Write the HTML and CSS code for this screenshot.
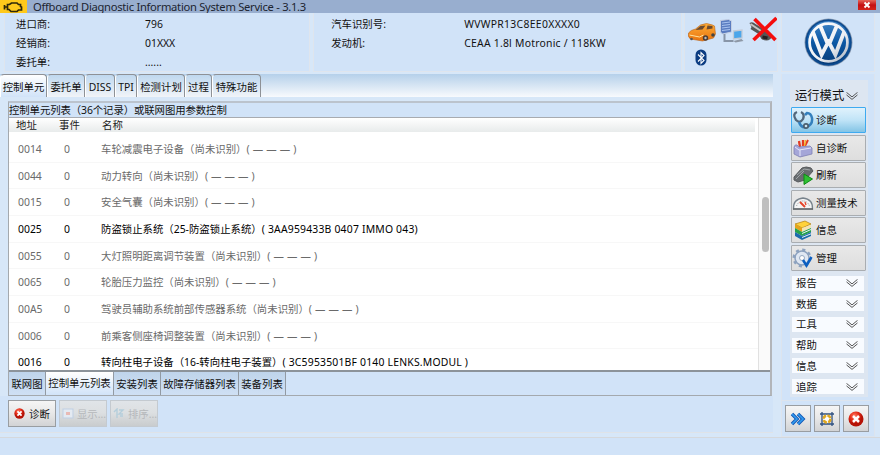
FILE: index.html
```
<!DOCTYPE html>
<html lang="zh-CN">
<head>
<meta charset="utf-8">
<title>Offboard Diagnostic Information System Service</title>
<link rel="stylesheet" href="styles.css">
</head>
<body>
<svg class="defs" width="0" height="0">
  <defs>
    <linearGradient id="blue" x2="0" y2="1"><stop offset="0" stop-color="#3f84c6"/><stop offset=".5" stop-color="#0b57a4"/><stop offset="1" stop-color="#073b77"/></linearGradient>
    <linearGradient id="silver" gradientUnits="userSpaceOnUse" x1="5" y1="5" x2="45" y2="45"><stop offset="0" stop-color="#fff"/><stop offset=".6" stop-color="#eceff4"/><stop offset="1" stop-color="#a4adba"/></linearGradient>
    <linearGradient id="orange" x2="0" y2="1"><stop offset="0" stop-color="#ffae38"/><stop offset="1" stop-color="#e8720c"/></linearGradient>
    <radialGradient id="red" cx=".4" cy=".3"><stop offset="0" stop-color="#ff8066"/><stop offset=".6" stop-color="#e52c18"/><stop offset="1" stop-color="#b51205"/></radialGradient>
    <symbol id="chev" viewBox="0 0 12 8"><path d="M.5.400 6 4.900 11.500.400M.5 2.900 6 7.400 11.500 2.900" fill="none" stroke="#444" stroke-width=".9"/></symbol>
    <symbol id="err" viewBox="0 0 16 16"><circle cx="8" cy="8" r="7.500" fill="url(#red)"/><path d="M5 5l6 6M11 5l-6 6" stroke="#fff" stroke-width="2.500"/></symbol>
  </defs>
</svg>
<header class="titlebar">
  <span class="engine"><svg width="27" height="13" viewBox="0 0 27 13"><path d="M7.500 4.500h2l2-1.500h5.500l1.500 1.500h2v2l1 .5v3h-3l-1.500 1.500h-6L9 9.500H7.500zM4.500 5v4.500M4.500 7h3" fill="none" stroke="#30290a" stroke-width="1.700"/></svg></span>
  <h1>Offboard Diagnostic Information System Service - 3.1.3</h1>
  <span class="close"><svg width="18" height="10" viewBox="0 0 18 10"><path d="M6.500 2.500l5 5M11.500 2.500l-5 5" stroke="#fff" stroke-width="1.900"/></svg></span>
</header>
<section class="info">
  <dl class="panel dealer"><dt>进口商:</dt><dd>796</dd><dt>经销商:</dt><dd>01XXX</dd><dt>委托单:</dt><dd>......</dd></dl>
  <dl class="panel vehicle"><dt>汽车识别号:</dt><dd class="vin">WVWPR13C8EE0XXXX0</dd><dt>发动机:</dt><dd class="eng">CEAA 1.8l Motronic / 118KW</dd></dl>
  <div class="panel status">
    <svg width="92" height="58" viewBox="1.500 0 92 58">
      <path d="M5 20q2-3 7-4l5-4q6-3 12 0l2 1 1 8-2 4-11 3L7 26q-3-2-2-6z" fill="url(#orange)" stroke="#b8651c" stroke-width=".6"/>
      <path d="M12 17l5-4 5-.5-3 4zM24 12.500l5 .5v2.500l-6 1z" fill="#6b4a30"/><path d="M6 22l10 2 4-2" stroke="#ffe3a0" fill="none"/>
      <circle cx="22" cy="25" r="2.700" fill="#4b3b33"/><circle cx="22" cy="25" r="1.200" fill="#bbb"/><circle cx="29.500" cy="22" r="1.800" fill="#444"/><circle cx="8" cy="26" r="1.300" fill="#555"/>
      <path d="M37 7.500l8-1 3 1.500v11l-9 2-2-2z" fill="#5a7cc0" stroke="#c4cfe3"/><path d="M38.500 10l8-1M38.500 12.500l8-1M38.500 15l8-1M38.500 17.500l8-1" stroke="#a9c4f0"/>
      <path d="M41 21v7h9" fill="none" stroke="#8895a7" stroke-width="2"/>
      <path d="M50 18l8.500-1v8l-8.500 1z" fill="#4ca6ea" stroke="#c3cbd7" stroke-width="1.300"/><path d="M50 28l8-2 2 2-8 1.500z" fill="#8e98a6"/>
      <path d="M66 10q3-2 6 1l5 3 8 4q5 4 2 8-4 3-9 0l-3-5-8-5 1-2z" fill="#555"/><path d="M67 11l12 8" stroke="#c5c5c5" stroke-width="2"/><path d="M79 24l5 1" stroke="#222" stroke-width="3"/>
      <path d="M71 6l21 21M93 5L70 27" stroke="#f50d0d" stroke-width="3.600"/>
      <rect x="12" y="36.500" width="11" height="16" rx="5.500" fill="#0b3c82"/><path d="M14.500 41.500l6 6-3 3v-11l3 3-6 6" fill="none" stroke="#fff" stroke-width="1.100"/>
    </svg>
  </div>
  <div class="panel brand">
    <svg width="49" height="49" viewBox="0 0 50 50">
      <circle cx="25" cy="25" r="24.500" fill="#8d9db3"/><circle cx="25" cy="25" r="23.700" fill="#0c4a8f"/><circle cx="25" cy="25" r="22" fill="url(#blue)"/>
      <g fill="none" stroke="url(#silver)" stroke-width="3.900"><circle cx="25" cy="25" r="19.300" stroke-width="2.800"/><path d="M16.500 8L23 23.500h4L33.500 8"/><path d="M9 14L18 37.500 24 26h2L32 37.500 41 14"/></g>
    </svg>
  </div>
</section>
<div class="body">
  <main>
    <nav class="tabs"><span class="on" style="width:47px">控制单元</span><span style="width:38px">委托单</span><span style="width:30px">DISS</span><span style="width:22px">TPI</span><span style="width:48px">检测计划</span><span style="width:27px">过程</span><span style="width:49px">特殊功能</span></nav>
    <section class="list">
      <h2>控制单元列表（36个记录）或联网图用参数控制</h2>
      <div class="view">
        <div class="grid">
          <div class="row head"><span>地址</span><span>事件</span><span>名称</span></div>
          <div class="row"><span>0014</span><span>0</span><span>车轮减震电子设备（尚未识别）<b>( — — — )</b></span></div>
          <div class="row"><span>0044</span><span>0</span><span>动力转向（尚未识别）<b>( — — — )</b></span></div>
          <div class="row"><span>0015</span><span>0</span><span>安全气囊（尚未识别）<b>( — — — )</b></span></div>
          <div class="row known"><span>0025</span><span>0</span><span>防盗锁止系统（25-防盗锁止系统）<b>( 3AA959433B 0407 IMMO 043)</b></span></div>
          <div class="row"><span>0055</span><span>0</span><span>大灯照明距离调节装置（尚未识别）<b>( — — — )</b></span></div>
          <div class="row"><span>0065</span><span>0</span><span>轮胎压力监控（尚未识别）<b>( — — — )</b></span></div>
          <div class="row"><span>00A5</span><span>0</span><span>驾驶员辅助系统前部传感器系统（尚未识别）<b>( — — — )</b></span></div>
          <div class="row"><span>0006</span><span>0</span><span>前乘客侧座椅调整装置（尚未识别）<b>( — — — )</b></span></div>
          <div class="row known"><span>0016</span><span>0</span><span>转向柱电子设备（16-转向柱电子装置）<b>( 3C5953501BF 0140 LENKS.MODUL )</b></span></div>
        </div>
        <div class="scroll"><i></i></div>
      </div>
      <nav class="subtabs"><span style="width:37px">联网图</span><span class="on" style="width:68px">控制单元列表</span><span style="width:47px">安装列表</span><span style="width:78px">故障存储器列表</span><span style="width:47px">装备列表</span></nav>
    </section>
    <div class="actions">
      <button><svg width="11" height="11"><use href="#err"/></svg>诊断</button>
      <button disabled><svg width="12" height="12" viewBox="0 0 12 12"><rect x="1" y="1" width="10" height="9" fill="#e4eaf2" stroke="#bfcfe3"/><rect x="4" y="4" width="4" height="3" fill="#e8bab5"/></svg>显示...</button>
      <button disabled><svg width="12" height="12" viewBox="0 0 12 12"><path d="M1 4l3-3v9M6 2h4l-4 4h4M7 8h3" fill="none" stroke="#b5cedb" stroke-width="1.400"/></svg>排序...</button>
    </div>
  </main>
  <aside>
    <div class="modes">
      <h3>运行模式<svg width="12" height="8"><use href="#chev"/></svg></h3>
      <a class="mode on"><svg width="22" height="22" viewBox="0 0 22 22"><path d="M5 3Q0 5 4 11q4 4 7-1 2-5-2-7" fill="none" stroke="#52687c" stroke-width="2.300"/><path d="M7 13q2 6 7 5 7-2 6-9-1-5-5-5l-2 2" fill="none" stroke="#3480bd" stroke-width="2.500"/><circle cx="14" cy="17" r="3" fill="#4a5e6e"/><circle cx="14" cy="17" r="1.300" fill="#c9e2f0"/></svg>诊断</a>
      <a class="mode"><svg width="22" height="22" viewBox="0 0 22 22"><path d="M8 10L7 4M11 9V3" stroke="#e23b22" stroke-width="2.300"/><path d="M13 9l3-6" stroke="#e23b22" stroke-width="2"/><path d="M12.500 9l1-6" stroke="#f7b42c" stroke-width="1.500"/><path d="M2 10q1-3 3-2l2 2 11-1 2 2v6l-12 3-6-3z" fill="#a5a6d8" stroke="#7f80b4" stroke-width=".8"/><path d="M3 10l4 3 12-2M8 13v6" fill="none" stroke="#e6e7fa"/></svg>自诊断</a>
      <a class="mode"><svg width="22" height="22" viewBox="0 0 22 22"><path d="M2 13l8-9q4-2 9 0l2 3-8 9-7 2-4-2z" fill="#696d70" stroke="#585b5d"/><path d="M5 11l7-6 6 1M4 15l8-8" fill="none" stroke="#a0a5a7"/><path d="M12 10l8.500 5-8.500 5.500z" fill="#2fc032" stroke="#0c8a14"/></svg>刷新</a>
      <a class="mode"><svg width="22" height="22" viewBox="0 0 22 22"><path d="M1.500 17q-.5-10 9.500-11 10 1 9.500 11z" fill="#f4f4f4" stroke="#78838c" stroke-width="1.300"/><path d="M4.500 14q2-5 6.500-5t6.500 5" fill="none" stroke="#999" stroke-dasharray="1 1"/><path d="M8 10l5 5" stroke="#e44328" stroke-width="2"/><path d="M13 10l1 3" stroke="#e44328" stroke-width="1.300"/><path d="M1 17h20" stroke="#555"/></svg>测量技术</a>
      <a class="mode"><svg width="22" height="22" viewBox="0 0 22 22"><path d="M3 5l10-3 6 3-9 4z" fill="#ffd23b" stroke="#b07b0c" stroke-width=".7"/><path d="M3 5l7 4v4L3 9z" fill="#e3a31c"/><path d="M10 9l9-3v2.500l-9 4z" fill="#f5e4ae"/><path d="M3 9l7 4 9-4v4l-9 4-7-4z" fill="#25a24b"/><path d="M3 13l7 4 9-4v4l-9 4-7-4z" fill="#1c6bac"/><path d="M10 14.500l9-4M10 18.500l9-3.700" stroke="#e6f1f1"/></svg>信息</a>
      <a class="mode"><svg width="22" height="22" viewBox="0 0 22 22"><circle cx="10" cy="11" r="7" fill="#dfe7f2" stroke="#8da2bf" stroke-width="1.500"/><circle cx="10" cy="11" r="8" fill="none" stroke="#8da2bf" stroke-width="3" stroke-dasharray="3 3.280"/><circle cx="10" cy="11" r="2.500" fill="#fff" stroke="#96a9c1"/><path d="M11 13l3.500 5.500L19.500 10" fill="none" stroke="#0d5fc1" stroke-width="2.500"/></svg>管理</a>
      <div class="menu"><a>报告<svg width="12" height="8"><use href="#chev"/></svg></a><a>数据<svg width="12" height="8"><use href="#chev"/></svg></a><a>工具<svg width="12" height="8"><use href="#chev"/></svg></a><a>帮助<svg width="12" height="8"><use href="#chev"/></svg></a><a>信息<svg width="12" height="8"><use href="#chev"/></svg></a><a>追踪<svg width="12" height="8"><use href="#chev"/></svg></a></div>
    </div>
    <div class="tools">
      <button><svg width="16" height="14" viewBox="0 0 16 14"><path d="M2 2l5 5-5 5M8 2l5 5-5 5" fill="none" stroke="#1457b4" stroke-width="3.500"/><path d="M2 2l5 5-5 5M8 2l5 5-5 5" fill="none" stroke="#319bf0" stroke-width="1.700"/></svg></button>
      <button><svg width="16" height="16" viewBox="0 0 16 16"><path d="M3 1v14M13 1v14M1 3h14M1 13h14" stroke="#315181" stroke-width="1.300"/><circle cx="8" cy="8" r="3.400" fill="#fff" stroke="#e0a820" stroke-width="2.500" stroke-dasharray="4 1.340"/></svg></button>
      <button><svg width="16" height="16"><use href="#err"/></svg></button>
    </div>
  </aside>
</div>
<footer></footer>
</body>
</html>
```
FILE: styles.css
```
* { box-sizing: border-box; }
body { margin: 0; width: 880px; height: 455px; overflow: hidden; background: #d1e3f8; color: #111; font: 10.4px/14px "Noto Sans", "Noto Sans CJK SC", sans-serif; }
h1, h2, h3, dl, dd { margin: 0; font-weight: normal; }
svg { flex: none; display: block; }
.defs { position: absolute; }
.titlebar { height: 13px; display: flex; background: #98aecf; }
.engine { width: 27px; height: 13px; background: #ffc91b; }
h1 { flex: 1; padding-left: 6px; font-size: 11.2px; line-height: 13px; letter-spacing: -.28px; color: #1c2430; white-space: nowrap; }
.close { width: 18px; height: 10px; margin-right: 4px; background: linear-gradient(#e56558, #c40f12 50%, #d42319); }
.info { height: 61px; display: grid; grid-template-columns: 306px 369px 94px 94px; column-gap: 2.700px; padding: 0 5px 3px 4px; background: #d7e7f8; }
.panel { background: #d1e3f8; border: 1px solid #dfe5ed; border-top: 0; }
dl.panel { display: grid; grid-template-rows: repeat(3, 19px); padding: 1px 0 0 11px; white-space: nowrap; }
.dealer { grid-template-columns: 129px 1fr; }
dl.vehicle { grid-template-columns: 133px 1fr; padding-left: 17.500px; }
.vin { letter-spacing: .32px; }
.eng { letter-spacing: .24px; }
dt, dd { line-height: 20px; }
.brand { display: flex; justify-content: center; padding-top: 5px; }
.body { height: 363px; display: flex; background: #d7e7f8; }
main { width: 773px; }
.tabs { height: 23px; display: flex; background: linear-gradient(#b5d0ea, #f8fafd); }
.tabs span { border: 1px solid #8e9196; border-left-color: #fff; border-bottom: 0; border-radius: 4px 4px 0 0; background: linear-gradient(#bfd8ef, #f1f4f8); text-align: center; line-height: 24px; white-space: nowrap; }
.tabs .on { background: linear-gradient(#fff, #d1e3f8); }
.list { height: 295px; margin: 4px 1px 0 8px; border: 1px solid #a4a9ae; border-top: 2px solid #bbc3cd; border-right: 2px solid #b2b5b9; background: #d1e3f8; }
h2 { font-size: 10.4px; height: 15px; line-height: 14px; letter-spacing: -.09px; border-bottom: 1px solid #a8abb0; white-space: nowrap; }
.view { height: 252px; display: flex; background: #fff; overflow: hidden; }
.grid { width: 749px; }
.row { height: 26.670px; display: grid; grid-template-columns: 43px 49px 1fr; line-height: 27px; color: #6a6a6a; white-space: nowrap; border-bottom: 1px solid #f7f7f7; }
.row span:nth-child(1) { padding-left: 9px; }
.row span:nth-child(2) { padding-left: 12px; }
.row b { font-weight: normal; letter-spacing: .2px; }
.row.known { color: #000; }
.row.head { width: 746px; height: 14px; line-height: 15px; color: #222; background: linear-gradient(#fff, #e8ebeb); margin-bottom: 4px; border: 0; }
.row.head span:nth-child(1), .row.head span:nth-child(2) { padding-left: 7px; }
.row.head span:nth-child(3) { padding-left: 1px; }
.scroll { width: 12px; border-left: 1px solid #e1e1e1; background: #fafafa; padding: 79px 0 0 3px; }
.scroll i { display: block; width: 7px; height: 55px; background: #bfbfbf; border-radius: 4px; }
.subtabs { height: 25px; display: flex; border-top: 2px solid #8c939a; }
.subtabs span { border-right: 1px solid #929aa3; background: linear-gradient(#bfd4eb, #cfe0f4); line-height: 24px; text-align: center; white-space: nowrap; }
.subtabs .on { background: linear-gradient(#fff, #d1e3f8); line-height: 22px; }
.actions { height: 37px; padding: 4px 0 0 8px; display: flex; gap: 3px; background: #d1e3f8; border-bottom: 1px solid #dfe3e8; }
button { font: inherit; white-space: nowrap; padding: 0; display: flex; align-items: center; justify-content: center; border: 1px solid #999da1; background: linear-gradient(#f5f5f5, #e8e8e8 48%, #d2d3d5); color: #111; }
.actions button { width: 48px; height: 27px; gap: 4px; }
.actions button:disabled { gap: 3px; padding-left: 2px; color: #b5b8bb; border-color: #c4cad0; background: linear-gradient(#e0e4e8, #dcdfe1 48%, #c9ccce); }
aside { width: 94px; margin-left: 8px; background: #d1e3f8; border: 1px solid #dde4ed; border-top: 0; }
.modes { width: 78px; height: 317px; margin: 6px 0 0 8px; padding: 0; background: #dde6f1; }
h3 { height: 27px; display: flex; align-items: center; gap: 2px; padding: 4px 0 0 5px; font-size: 12.300px; white-space: nowrap; }
.mode { width: 75px; height: 26px; margin: 0 0 1.600px 1px; display: flex; align-items: center; gap: 2px; border: 1px solid #a9adb1; border-radius: 1px; background: linear-gradient(#e8e8e8, #dedede); white-space: nowrap; line-height: 16px; }
.mode.on { border-color: #3eaaf0; background: linear-gradient(#e0f2fc, #c1e4f7 50%, #83c4e5); }
.menu { display: grid; gap: 5.700px; padding: 3px 4px 0 2px; }
.menu a { height: 15px; padding: 0 6px 0 4px; display: flex; align-items: center; justify-content: space-between; background: #f8fbff; }
.tools { margin-top: 3px; padding: 4px 0 0 3px; border-top: 1px solid #dde4ed; display: flex; gap: 3px; }
.tools button { width: 26px; height: 27px; }
footer { height: 18px; border-top: 1px solid #d5d8dc; background: #d1e3f8; }
```
